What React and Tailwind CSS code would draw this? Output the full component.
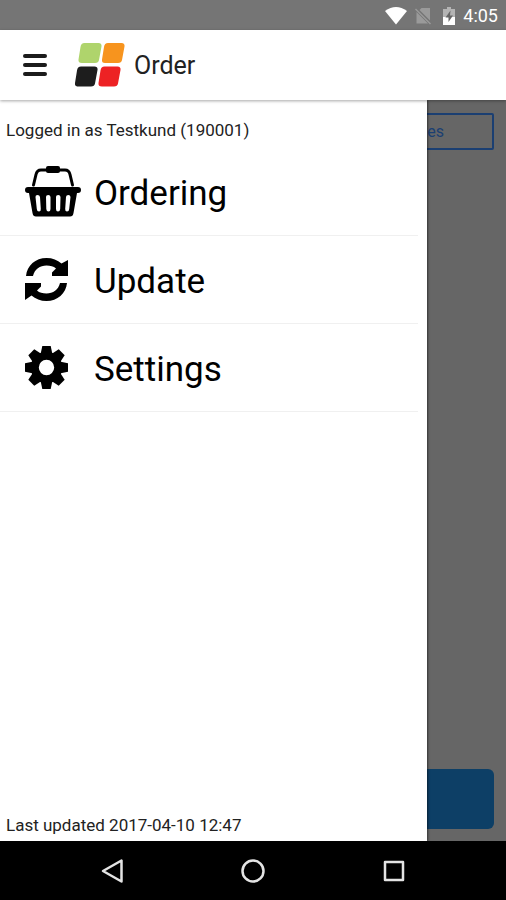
const MENU_ITEMS = [
  { label: 'Ordering', Icon: BasketIcon },
  { label: 'Update', Icon: RefreshIcon },
  { label: 'Settings', Icon: GearIcon },
];

function BasketIcon() {
  return (
    <svg className="h-[52px] w-14" viewBox="0 0 56 52" aria-hidden="true">
      <path d="M8.500 19 11 8.500Q12 4 16 4H40Q44 4 45 8.500L47.500 19" fill="none" stroke="#000" strokeWidth="3" strokeLinecap="round" />
      <rect x="21" y="0" width="14" height="7" rx="2" />
      <path
        fillRule="evenodd"
        d="M3 21H53Q56 21 56 24T53 27H52L48.500 47Q48 50.500 45 50.500H11Q8 50.500 7.500 47L4 27H3Q0 27 0 24T3 21ZM10.500 31Q10.300 29 12.500 29T15 31L15.800 43Q16 45.500 14 45.500T11.800 43ZM21 31Q21 29 23.200 29T25.500 31V43Q25.500 45.500 23.500 45.500T21.300 43ZM31 31Q31 29 33.200 29T35.500 31L35.200 43Q35 45.500 33 45.500T31 43ZM41 31Q41.200 29 43.300 29T45.500 31L44.200 43Q44 45.500 42 45.500T40.200 43Z"
      />
    </svg>
  );
}

function RefreshIcon() {
  return (
    <svg className="size-[43px]" viewBox="0 0 43 43" aria-hidden="true">
      <path d="M1 18C2 7.500 10.500 0 21.500 0C27.500 0 32.500 2 36.500 5.500L43 2V18H27V14.500L31 10.500C28.500 8.300 25.500 7.500 21.500 7.500C15 7.500 9.500 11.500 8 18Z" />
      <path d="M42 25C41 35.500 32.500 43 21.500 43C15.500 43 10.500 41 6.500 37.500L0 42V25H16V28.500L12 32.500C14.500 34.700 17.500 35.500 21.500 35.500C28 35.500 33.500 31.500 35 25Z" />
    </svg>
  );
}

function GearIcon() {
  return (
    <svg className="size-[43px]" viewBox="-21.5 -21.5 43 43" aria-hidden="true">
      <circle r="11.700" fill="none" stroke="#000" strokeWidth="8" />
      {[0, 45, 90, 135, 180, 225, 270, 315].map((angle) => (
        <path key={angle} d="M-4.200-21.500H4.200L6-13H-6Z" transform={`rotate(${angle})`} />
      ))}
    </svg>
  );
}

function Logo() {
  return (
    <svg className="h-11 w-[50px]" viewBox="0 0 50 44" aria-hidden="true">
      <path fill="#afd46c" d="M9.500 0H23.500Q27 0 26.500 3.500L24 17Q23.500 20 20 20H7Q3 20 3.500 16.500L5.500 4Q6 0 9.500 0Z" />
      <path fill="#f7941e" d="M33 0H46.500Q50 0 49.500 3.500L47 17Q46.500 20 43 20H30Q26.500 20 27 16.500L29 4Q29.500 0 33 0Z" />
      <path fill="#1d1d1d" d="M6 23.500H19.500Q23 23.500 22.500 27L20 40.500Q19.500 43.500 16 43.500H3.500Q-.5 43.500 0 40L2 27.500Q2.500 23.500 6 23.500Z" />
      <path fill="#ed2224" d="M29.500 23.500H42.500Q46 23.500 45.500 27L43 40.500Q42.500 43.500 39 43.500H27Q23 43.500 23.500 40L25.500 27.500Q26 23.500 29.500 23.500Z" />
    </svg>
  );
}

function StatusBar() {
  return (
    <div className="flex h-[30px] shrink-0 items-center justify-end bg-[#757575] pt-0.5 pr-2 text-lg text-white">
      <svg className="h-[18px] w-[22px]" viewBox="0 0 22 18" aria-hidden="true">
        <path fill="#fff" d="M0 4Q11-4 22 4L11 17.500Z" />
      </svg>
      <svg className="ml-2 h-[18px] w-4" viewBox="0 0 16 18" aria-hidden="true">
        <path fill="#9a9a9a" d="M6.500 1H15V13.500L4.500 3ZM1.500 5 13 16.500H1.500Z" />
        <path stroke="#9a9a9a" strokeWidth="1.500" d="M.5 2 15.500 17" />
      </svg>
      <svg className="mr-2 ml-3 h-[18px] w-3" viewBox="0 0 12 18" aria-hidden="true">
        <path fill="#b4b4b4" d="M4 0H8V2H12V10H0V2H4Z" />
        <path fill="#fff" d="M0 10H12V18H0Z" />
        <path fill="#666" d="M7.500 3.500 2.500 10.500H5.500V15L10 8.500H7Z" />
      </svg>
      <time>4:05</time>
    </div>
  );
}

function Header() {
  return (
    <header className="relative z-20 flex h-[70px] shrink-0 items-center bg-white pl-[23px] shadow-[0_1px_3px_rgba(0,0,0,0.35)]">
      <button type="button" aria-label="Menu" className="flex w-6 flex-col gap-[5px]">
        <span className="h-1 rounded-xs bg-[#1c1c1c]" />
        <span className="h-1 rounded-xs bg-[#1c1c1c]" />
        <span className="h-1 rounded-xs bg-[#1c1c1c]" />
      </button>
      <div className="ml-7">
        <Logo />
      </div>
      <h1 className="ml-[9px] pt-0.5 text-[25px] text-[#222]">Order</h1>
    </header>
  );
}

function Drawer() {
  return (
    <nav className="absolute inset-y-0 left-0 z-10 flex w-[427px] flex-col bg-white shadow-[1px_0_2px_rgba(0,0,0,0.5)]">
      <p className="px-1.5 pt-[18px] pb-1.5 text-[17px] leading-6 text-[#222]">Logged in as Testkund (190001)</p>
      <ul className="mr-[9px]">
        {MENU_ITEMS.map(({ label, Icon }) => (
          <li key={label} className="border-b border-[#f0f0f0]">
            <a href="#" className="flex h-[87px] items-center pl-[25px] text-[35px] text-black">
              <span className="w-[69px]">
                <Icon />
              </span>
              <span className="pt-1.5">{label}</span>
            </a>
          </li>
        ))}
      </ul>
      <p className="mt-auto px-1.5 pb-1 text-[17px] leading-6 text-[#222]">Last updated 2017-04-10 12:47</p>
    </nav>
  );
}

function NavBar() {
  return (
    <div className="flex h-[59px] shrink-0 items-center justify-around bg-black px-[42px]">
      <button type="button" aria-label="Back">
        <svg className="size-6" viewBox="0 0 24 24" fill="none" stroke="#e4e4e4" strokeWidth="2.500" strokeLinejoin="round">
          <path d="M21.500 1.500V22.500L3 12Z" />
        </svg>
      </button>
      <button type="button" aria-label="Home">
        <svg className="size-6" viewBox="0 0 24 24" fill="none" stroke="#e4e4e4" strokeWidth="2.500">
          <circle cx="12" cy="12" r="10.500" />
        </svg>
      </button>
      <button type="button" aria-label="Recent apps">
        <svg className="size-6" viewBox="0 0 24 24" fill="none" stroke="#e4e4e4" strokeWidth="2.500" strokeLinejoin="round">
          <rect x="3" y="3" width="18" height="18" />
        </svg>
      </button>
    </div>
  );
}

export default function App() {
  return (
    <div className="flex min-h-screen flex-col bg-white font-[Roboto,sans-serif]">
      <StatusBar />
      <Header />
      <div className="relative flex flex-1 flex-col">
        <main className="flex flex-1 flex-col justify-between bg-[#666] px-3 pt-[13px] pb-3">
          <button
            type="button"
            className="h-[37px] rounded-xs border-2 border-[#1b3f72] pr-12 text-right text-base text-[#1b3f72]"
          >
            tes
          </button>
          <button type="button" aria-label="Continue" className="h-[60px] rounded-md bg-[#0d3f66]" />
        </main>
        <Drawer />
      </div>
      <NavBar />
    </div>
  );
}
